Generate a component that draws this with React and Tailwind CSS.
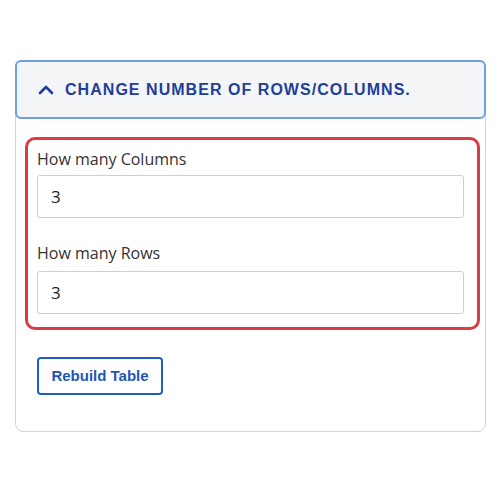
export default function App() {
  return (
    <div className="w-[500px] h-[500px] bg-white pt-[60px] px-[15px] font-['Open_Sans','Liberation_Sans',sans-serif]">
      <div className="w-[471px] h-[372px] border border-[#d4d4d4] rounded-lg flex flex-col">
        {/* Accordion header */}
        <div className="h-[59px] -mx-px -mt-px bg-[#f4f5f7] border-2 border-[#6d9fe3] rounded-md flex items-center pl-[21px] gap-[11px]">
          <svg width="16" height="11" viewBox="0 0 16 11" fill="none" className="shrink-0">
            <path d="M2 9 L8 3 L14 9" stroke="#1f3f9a" strokeWidth="2.6" strokeLinecap="round" strokeLinejoin="round" />
          </svg>
          <span className="text-[16px] font-bold tracking-[0.065em] text-[#1f3f9a] font-['Liberation_Sans',sans-serif]">
            CHANGE NUMBER OF ROWS/COLUMNS.
          </span>
        </div>

        {/* Form fields */}
        <div className="mt-[18px] ml-[9px] w-[455px] h-[193px] border-[3px] border-[#dc3b42] rounded-[10px] pl-[9px] pr-[13px] pt-[7px]">
          <label className="block text-[16px] text-[#333] leading-[24px]">How many Columns</label>
          <div className="mt-[4px] h-[43px] border border-[#cfcfcf] rounded-[3px] flex items-center px-[13px] text-[17px] text-[#222]">3</div>
          <label className="block mt-[23px] text-[16px] text-[#333] leading-[24px]">How many Rows</label>
          <div className="mt-[6px] h-[43px] border border-[#cfcfcf] rounded-[3px] flex items-center px-[13px] text-[17px] text-[#222]">3</div>
        </div>

        <div className="mt-[27px] ml-[21px]">
          <button className="w-[126px] h-[38px] border-2 border-[#1f5fc4] rounded-[4px] text-[15px] font-bold text-[#1f56b5] font-['Liberation_Sans',sans-serif]">
            Rebuild Table
          </button>
        </div>
      </div>
    </div>
  );
}
